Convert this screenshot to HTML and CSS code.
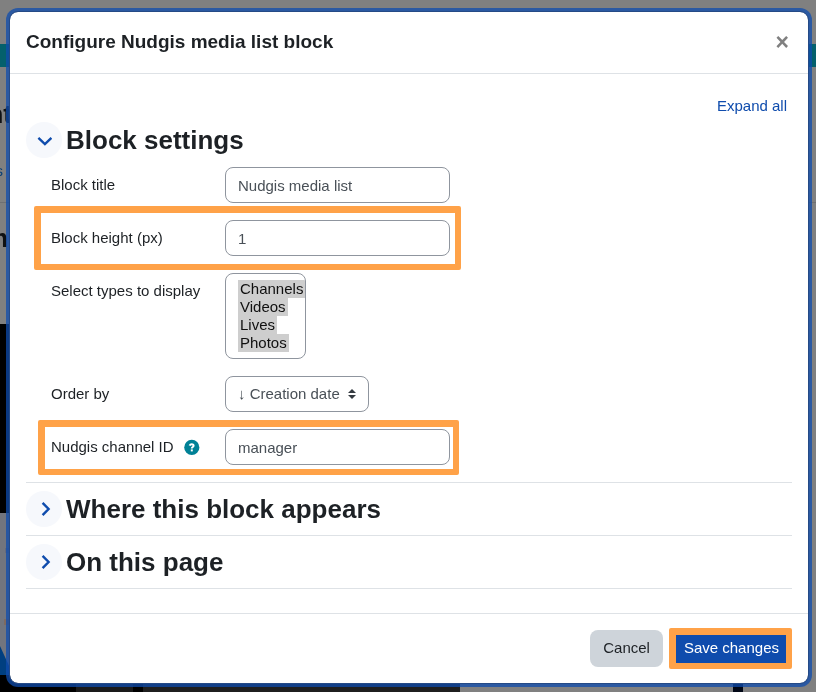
FILE: index.html
```html
<!DOCTYPE html>
<html lang="en">
<head>
<meta charset="utf-8">
<meta name="viewport" content="width=device-width, initial-scale=1">
<title>Configure Nudgis media list block</title>
<link rel="stylesheet" href="styles.css">
</head>
<body>
<svg class="backdrop" aria-hidden="true">
  <rect y="44" width="100%" height="23" fill="#04606c"/>
  <rect y="202" width="100%" height="1" fill="#6f7072"/>
  <text class="bg-heading" x="12" y="123" text-anchor="end">nt</text>
  <text class="bg-link" x="3" y="176" text-anchor="end">s</text>
  <text class="bg-heading" x="8" y="247" text-anchor="end">m</text>
  <rect y="324" width="30" height="189" fill="#000"/>
  <rect y="513" width="30" height="162" fill="#72757e"/>
  <rect x="5" y="548" width="10" height="5" fill="#656a7c"/>
  <rect x="4" y="619" width="8" height="6" fill="#7e6a60"/>
  <path d="M0 646L10 668V675H0z" fill="#003f80"/>
  <rect y="675" width="143" height="17" fill="#000"/>
  <rect x="76" y="675" width="57" height="17" fill="#1a1a1a"/>
  <rect x="143" y="675" width="317" height="17" fill="#1f1f1f"/>
  <rect x="733" y="675" width="10" height="17" fill="#000615"/>
</svg>

<main class="modal" role="dialog" aria-labelledby="dialog-title">
  <header class="modal-header">
    <h1 id="dialog-title">Configure Nudgis media list block</h1>
    <button class="close" type="button" aria-label="Close">×</button>
  </header>

  <form class="modal-form">
    <div class="modal-body">
      <div class="expand"><a href="#">Expand all</a></div>

      <section class="section">
        <div class="section-head">
          <button class="toggle" type="button" aria-label="Collapse block settings" aria-expanded="true">
            <svg width="16" height="16" viewBox="0 0 16 16"><path d="M2.4 5.8L8.9 12L15.4 5.8"/></svg>
          </button>
          <h2>Block settings</h2>
        </div>
        <div class="fields">
          <div class="field">
            <label for="title">Block title</label>
            <input id="title" type="text" value="Nudgis media list">
          </div>
          <div class="field marked marked-height">
            <label for="height">Block height (px)</label>
            <input id="height" type="text" value="1">
          </div>
          <div class="field">
            <label for="types">Select types to display</label>
            <select id="types" class="list" multiple size="4">
              <option selected>Channels</option>
              <option selected>Videos</option>
              <option selected>Lives</option>
              <option selected>Photos</option>
            </select>
          </div>
          <div class="field">
            <label for="order">Order by</label>
            <div class="dropdown">
              <select id="order"><option>↓ Creation date</option></select>
              <svg class="carets" width="8" height="10" viewBox="0 0 4 5" aria-hidden="true"><path d="M2 0L0 2h4zm0 5L0 3h4z"/></svg>
            </div>
          </div>
          <div class="field marked marked-channel">
            <div class="label-group">
              <label for="channel">Nudgis channel ID</label>
              <button class="help" type="button" aria-label="Help with Nudgis channel ID">
                <svg width="16" height="16" viewBox="0 0 16 16"><circle cx="7.8" cy="8.4" r="7.6"/><path d="M5.6 6.6C6 5.6 6.8 5.2 7.7 5.2C8.9 5.2 9.6 5.8 9.6 6.7C9.6 8 7.8 7.9 7.8 9.4"/><rect x="6.8" y="10.4" width="2" height="2"/></svg>
              </button>
            </div>
            <input id="channel" type="text" value="manager">
          </div>
        </div>
      </section>

      <section class="section">
        <div class="section-head">
          <button class="toggle" type="button" aria-label="Expand where this block appears" aria-expanded="false">
            <svg width="16" height="16" viewBox="0 0 16 16"><path d="M6.6 1.8L12.6 8L6.6 14.2"/></svg>
          </button>
          <h2>Where this block appears</h2>
        </div>
      </section>

      <section class="section">
        <div class="section-head">
          <button class="toggle" type="button" aria-label="Expand on this page" aria-expanded="false">
            <svg width="16" height="16" viewBox="0 0 16 16"><path d="M6.6 1.8L12.6 8L6.6 14.2"/></svg>
          </button>
          <h2>On this page</h2>
        </div>
      </section>
    </div>

    <footer class="modal-footer">
      <button class="btn btn-secondary" type="button">Cancel</button>
      <button class="btn btn-primary" type="submit">Save changes</button>
    </footer>
  </form>
</main>
</body>
</html>
```
FILE: styles.css
```css
* {
  box-sizing: border-box;
}

body {
  margin: 0;
  padding: 11px 7px 8px 9px;
  background: #808080;
  color: #1d2125;
  font: 15px/22px "Liberation Sans", Arial, sans-serif;
}

input,
select,
button {
  margin: 0;
  font: inherit;
}

h1,
h2 {
  margin: 0;
  font-weight: 700;
}

/* Dimmed page behind the dialog */
.backdrop {
  position: fixed;
  inset: 0;
  z-index: -1;
  width: 100%;
  height: 100%;
}

.bg-heading {
  fill: #0f1113;
  font-size: 26px;
  font-weight: 700;
}

.bg-link {
  fill: #0b4076;
}

.modal {
  border: 1px solid #254a86;
  border-radius: 9px;
  background: #fff;
  background-clip: padding-box;
  box-shadow: 0 0 0 3px rgba(15, 76, 173, 0.75);
}

.modal-header {
  display: flex;
  align-items: center;
  justify-content: space-between;
  height: 62px;
  padding: 0 16px 2px;
  border-bottom: 1px solid #dee2e6;
}

h1 {
  font-size: 19px;
}

.close {
  padding: 0 3px;
  border: 0;
  background: none;
  color: #808080;
  font-size: 23px;
  font-weight: 700;
}

.modal-body {
  padding: 20px 16px 24px;
}

.expand {
  height: 20px;
  padding-right: 5px;
  line-height: 24px;
  text-align: right;
}

.expand a {
  color: #0f4cad;
  text-decoration: none;
}

.section {
  padding: 8px 0;
  border-bottom: 1px solid #dee2e6;
}

.section-head {
  display: flex;
  align-items: center;
  gap: 4px;
}

h2 {
  font-size: 26px;
}

.toggle {
  display: grid;
  place-items: center;
  width: 36px;
  height: 36px;
  padding: 0;
  border: 0;
  border-radius: 50%;
  background: #f6f8fc;
}

.toggle path {
  fill: none;
  stroke: #0f4cad;
  stroke-width: 2.4;
}

.fields {
  display: grid;
  justify-items: start;
  gap: 17px;
  padding: 9px 0 9px 25px;
}

.field {
  position: relative;
  display: grid;
  grid-template-columns: 174px 225px;
  align-items: start;
  justify-items: start;
}

.field label {
  padding: 7px 0;
}

.label-group {
  display: flex;
  align-items: center;
  gap: 10px;
}

.field input,
.field select {
  border: 1px solid #8f959e;
  border-radius: 8px;
  background: #fff;
  color: #495057;
}

.field input {
  width: 100%;
  height: 36px;
  padding: 0 12px;
}

.field .list {
  width: 81px;
  height: 86px;
  padding: 6px 0 6px 12px;
  overflow: hidden;
}

.list option {
  width: fit-content;
  padding: 0 2px;
}

.dropdown {
  position: relative;
}

.field .dropdown select {
  appearance: none;
  width: 144px;
  height: 36px;
  padding: 0 28px 0 12px;
}

.carets {
  position: absolute;
  top: 13px;
  right: 13px;
  fill: #343a40;
  pointer-events: none;
}

.help {
  display: flex;
  padding: 0;
  border: 0;
  background: none;
}

.help circle {
  fill: #008196;
}

.help path {
  fill: none;
  stroke: #fff;
  stroke-width: 2;
}

.help rect {
  fill: #fff;
}

/* Orange annotation frames */
.marked::after,
.btn-primary::after {
  position: absolute;
  border: solid #ffa248;
  border-width: 7px 6px 6px 7px;
  border-radius: 2px;
  content: "";
  pointer-events: none;
}

.marked-height::after {
  inset: -14px -11px -14px -17px;
}

.marked-channel::after {
  inset: -9px -9px -10px -13px;
}

.modal-footer {
  display: flex;
  justify-content: flex-end;
  gap: 8px;
  padding: 16px;
  border-top: 1px solid #dee2e6;
}

.btn {
  height: 37px;
  padding: 0 12px 2px;
  border: 1px solid transparent;
  border-radius: 8px;
}

.btn-secondary {
  background: #ced4da;
  color: #1d2125;
}

.btn-primary {
  position: relative;
  background: #0f4cad;
  color: #fff;
}

.btn-primary::after {
  inset: -3px -1px -3px -3px;
}
```
